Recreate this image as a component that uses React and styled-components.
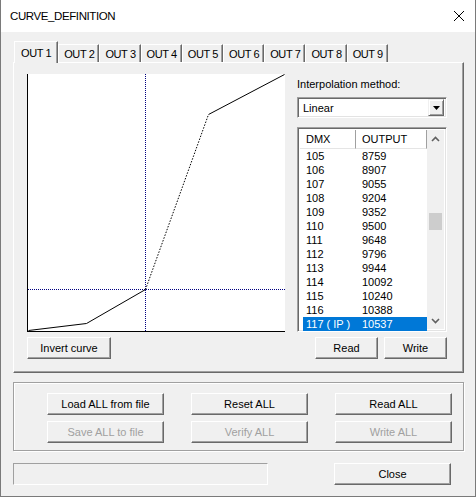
import React from "react";
import styled, { createGlobalStyle } from "styled-components";

const GlobalStyle = createGlobalStyle`
  html, body {
    margin: 0;
    padding: 0;
    background: #f0f0f0;
  }
  * {
    box-sizing: border-box;
  }
`;

const UI_FONT = `"Liberation Sans", Arial, sans-serif`;

const Window = styled.div`
  width: 476px;
  height: 497px;
  border: 1px solid #7a7a7a;
  border-top: none;
  background: #f0f0f0;
  font-family: ${UI_FONT};
  font-size: 11px;
  color: #000;
  display: flex;
  flex-direction: column;
`;

const TitleBar = styled.div`
  height: 32px;
  background: #fff;
  display: flex;
  align-items: center;
  justify-content: space-between;
  padding: 0 10px 0 9px;
  font-size: 11.5px;
  letter-spacing: -0.4px;
`;

const CloseGlyph = () => (
  <svg width="12" height="12" viewBox="0 0 12 12">
    <path d="M1 1 L11 11 M11 1 L1 11" stroke="#000" strokeWidth="1" />
  </svg>
);

const Body = styled.div`
  display: flex;
  flex-direction: column;
  padding: 9px 11px 0 12px;
`;

const TabStrip = styled.div`
  display: flex;
  align-items: flex-end;
  height: 21px;
  padding-left: 1px;
  position: relative;
  z-index: 1;
`;

const Tab = styled.div`
  height: ${(p) => (p.$active ? "22px" : "18px")};
  margin-bottom: ${(p) => (p.$active ? "-1px" : "0")};
  padding: ${(p) => (p.$active ? "0 6px" : "0 4px 0 5px")};
  display: flex;
  align-items: center;
  justify-content: center;
  background: #f0f0f0;
  border-top: 1px solid #fff;
  border-left: 1px solid #fff;
  border-right: 1px solid #696969;
  box-shadow: inset -1px 0 #a0a0a0;
  letter-spacing: -0.4px;
  padding-top: ${(p) => (p.$active ? "0" : "1px")};
`;

const Panel = styled.div`
  height: 311px;
  border-top: 1px solid #fff;
  border-left: 1px solid #fff;
  border-right: 1px solid #696969;
  border-bottom: 1px solid #696969;
  box-shadow: inset -1px -1px #a0a0a0;
  padding: 11px 17px 0 13px;
  display: grid;
  grid-template-columns: 258px 150px;
  column-gap: 12px;
`;

const Column = styled.div`
  display: flex;
  flex-direction: column;
`;

const Chart = styled.div`
  width: 258px;
  height: 258px;
  background: #fff;
  border-left: 1px solid #000;
  border-bottom: 1px solid #000;
  svg {
    display: block;
  }
`;

const ButtonRow = styled.div`
  display: flex;
  gap: 6px;
  margin-top: 5px;
  justify-content: ${(p) => (p.$right ? "flex-end" : "flex-start")};
`;

const Button = styled.div`
  width: ${(p) => p.$w || 117}px;
  height: 22px;
  display: flex;
  align-items: center;
  justify-content: center;
  background: #f0f0f0;
  border-top: 1px solid #fff;
  border-left: 1px solid #fff;
  border-right: 1px solid #696969;
  border-bottom: 1px solid #696969;
  box-shadow: inset -1px -1px #a0a0a0;
  color: ${(p) => (p.$disabled ? "#a0a0a0" : "#000")};
  cursor: default;
  user-select: none;
`;

const Label = styled.div`
  margin-top: 3px;
  height: 14px;
  line-height: 14px;
  padding-left: 0;
`;

const sunken = `
  border-top: 1px solid #a0a0a0;
  border-left: 1px solid #a0a0a0;
  border-right: 1px solid #fff;
  border-bottom: 1px solid #fff;
  box-shadow: inset 1px 1px #696969, inset -1px -1px #e3e3e3;
`;

const Select = styled.div`
  margin-top: 6px;
  height: 21px;
  ${sunken}
  background: #fff;
  display: flex;
  align-items: center;
  justify-content: space-between;
  padding: 2px 2px 2px 5px;
`;

const DropButton = styled.div`
  width: 16px;
  height: 17px;
  background: #f0f0f0;
  border-top: 1px solid #f0f0f0;
  border-left: 1px solid #f0f0f0;
  border-right: 1px solid #696969;
  border-bottom: 1px solid #696969;
  box-shadow: inset 1px 1px #fff, inset -1px -1px #a0a0a0;
  display: flex;
  align-items: center;
  justify-content: center;
`;

const ListBox = styled.div`
  margin-top: 9px;
  height: 205px;
  ${sunken}
  background: #fff;
  padding: 2px;
  display: flex;
`;

const Table = styled.div`
  flex: 1;
  display: flex;
  flex-direction: column;
`;

const Header = styled.div`
  display: flex;
  height: 19px;
`;

const HeadCell = styled.div`
  width: ${(p) => p.$w}px;
  height: 19px;
  padding-left: 6px;
  display: flex;
  align-items: center;
  background: #fff;
  border-right: 1px solid #a0a0a0;
  border-bottom: 1px solid #e5e5e5;
`;

const Rows = styled.div`
  padding-left: 3px;
`;

const Row = styled.div`
  width: 124px;
  height: 14px;
  display: grid;
  grid-template-columns: 56px 1fr;
  align-items: center;
  background: ${(p) => (p.$selected ? "#0078d7" : "transparent")};
  color: ${(p) => (p.$selected ? "#fff" : "#000")};
  span {
    padding-left: 3px;
    white-space: pre;
  }
`;

const ScrollBar = styled.div`
  width: 17px;
  background: #f0f0f0;
  display: flex;
  flex-direction: column;
`;

const ScrollArrow = styled.div`
  height: 17px;
  display: flex;
  align-items: center;
  justify-content: center;
`;

const Track = styled.div`
  flex: 1;
  padding: 0 2px;
`;

const Thumb = styled.div`
  height: 17px;
  background: #cdcdcd;
`;

const GroupBox = styled.div`
  margin-top: 9px;
  height: 69px;
  border: 1px solid #a0a0a0;
  box-shadow: inset 1px 1px #fff, 1px 1px #fff;
  padding: 10px 13px 0 33px;
  display: grid;
  grid-template-columns: repeat(3, 117px);
  grid-auto-rows: 22px;
  column-gap: 27px;
  row-gap: 6px;
`;

const Footer = styled.div`
  margin-top: 12px;
  display: flex;
  justify-content: space-between;
  padding-right: 13px;
`;

const StatusField = styled.div`
  width: 255px;
  height: 22px;
  border-top: 1px solid #a0a0a0;
  border-left: 1px solid #a0a0a0;
  border-right: 1px solid #fff;
  border-bottom: 1px solid #fff;
`;

const Chevron = ({ up }) => (
  <svg width="9" height="6" viewBox="0 0 9 6">
    <path
      d={up ? "M1 5 L4.5 1.5 L8 5" : "M1 1 L4.5 4.5 L8 1"}
      fill="none"
      stroke="#606060"
      strokeWidth="1.6"
    />
  </svg>
);

const tabs = ["OUT 1", "OUT 2", "OUT 3", "OUT 4", "OUT 5", "OUT 6", "OUT 7", "OUT 8", "OUT 9"];

const table = [
  ["105", "8759"],
  ["106", "8907"],
  ["107", "9055"],
  ["108", "9204"],
  ["109", "9352"],
  ["110", "9500"],
  ["111", "9648"],
  ["112", "9796"],
  ["113", "9944"],
  ["114", "10092"],
  ["115", "10240"],
  ["116", "10388"],
  ["117 ( IP )", "10537"],
];

// curve nodes in chart pixels (origin top-left, 257x257 plot)
const cursor = { x: 117, y: 215 };
const lower = [[0, 256], [58, 249], [117, 215]];
const upper = [[180, 40], [256, 0]];

const pts = (list) => list.map(([x, y]) => `${x + 0.5},${y + 0.5}`).join(" ");

function CurveChart() {
  return (
    <Chart>
      <svg width="257" height="257" viewBox="0 0 257 257">
        <g stroke="#000080" strokeWidth="1" strokeDasharray="1 1" shapeRendering="crispEdges">
          <line x1={cursor.x + 0.5} y1="0" x2={cursor.x + 0.5} y2="257" />
          <line x1="0" y1={cursor.y + 0.5} x2="257" y2={cursor.y + 0.5} />
        </g>
        <polyline points={pts(lower)} fill="none" stroke="#000" strokeWidth="1" />
        <polyline
          points={pts([lower[2], upper[0]])}
          fill="none"
          stroke="#000"
          strokeWidth="1"
          strokeDasharray="1.5 1.5"
        />
        <polyline points={pts(upper)} fill="none" stroke="#000" strokeWidth="1" />
      </svg>
    </Chart>
  );
}

const thumbOffset = 66;

export default function App() {
  return (
    <>
      <GlobalStyle />
      <Window>
        <TitleBar>
          <span>CURVE_DEFINITION</span>
          <CloseGlyph />
        </TitleBar>
        <Body>
          <TabStrip>
            {tabs.map((t, i) => (
              <Tab key={t} $active={i === 0}>
                {t}
              </Tab>
            ))}
          </TabStrip>
          <Panel>
            <Column>
              <CurveChart />
              <ButtonRow>
                <Button $w={84}>Invert curve</Button>
              </ButtonRow>
            </Column>
            <Column>
              <Label>Interpolation method:</Label>
              <Select>
                <span>Linear</span>
                <DropButton>
                  <svg width="7" height="4" viewBox="0 0 7 4">
                    <path d="M0 0 H7 L3.5 4 Z" fill="#000" />
                  </svg>
                </DropButton>
              </Select>
              <ListBox>
                <Table>
                  <Header>
                    <HeadCell $w={56}>DMX</HeadCell>
                    <HeadCell $w={71}>OUTPUT</HeadCell>
                  </Header>
                  <Rows>
                    {table.map(([dmx, out], i) => (
                      <Row key={dmx} $selected={i === table.length - 1}>
                        <span>{dmx}</span>
                        <span>{out}</span>
                      </Row>
                    ))}
                  </Rows>
                </Table>
                <ScrollBar>
                  <ScrollArrow>
                    <Chevron up />
                  </ScrollArrow>
                  <Track>
                    <Thumb style={{ marginTop: thumbOffset }} />
                  </Track>
                  <ScrollArrow>
                    <Chevron />
                  </ScrollArrow>
                </ScrollBar>
              </ListBox>
              <ButtonRow $right>
                <Button $w={63}>Read</Button>
                <Button $w={63}>Write</Button>
              </ButtonRow>
            </Column>
          </Panel>
          <GroupBox>
            <Button>Load ALL from file</Button>
            <Button>Reset ALL</Button>
            <Button>Read ALL</Button>
            <Button $disabled>Save ALL to file</Button>
            <Button $disabled>Verify ALL</Button>
            <Button $disabled>Write ALL</Button>
          </GroupBox>
          <Footer>
            <StatusField />
            <Button>Close</Button>
          </Footer>
        </Body>
      </Window>
    </>
  );
}
